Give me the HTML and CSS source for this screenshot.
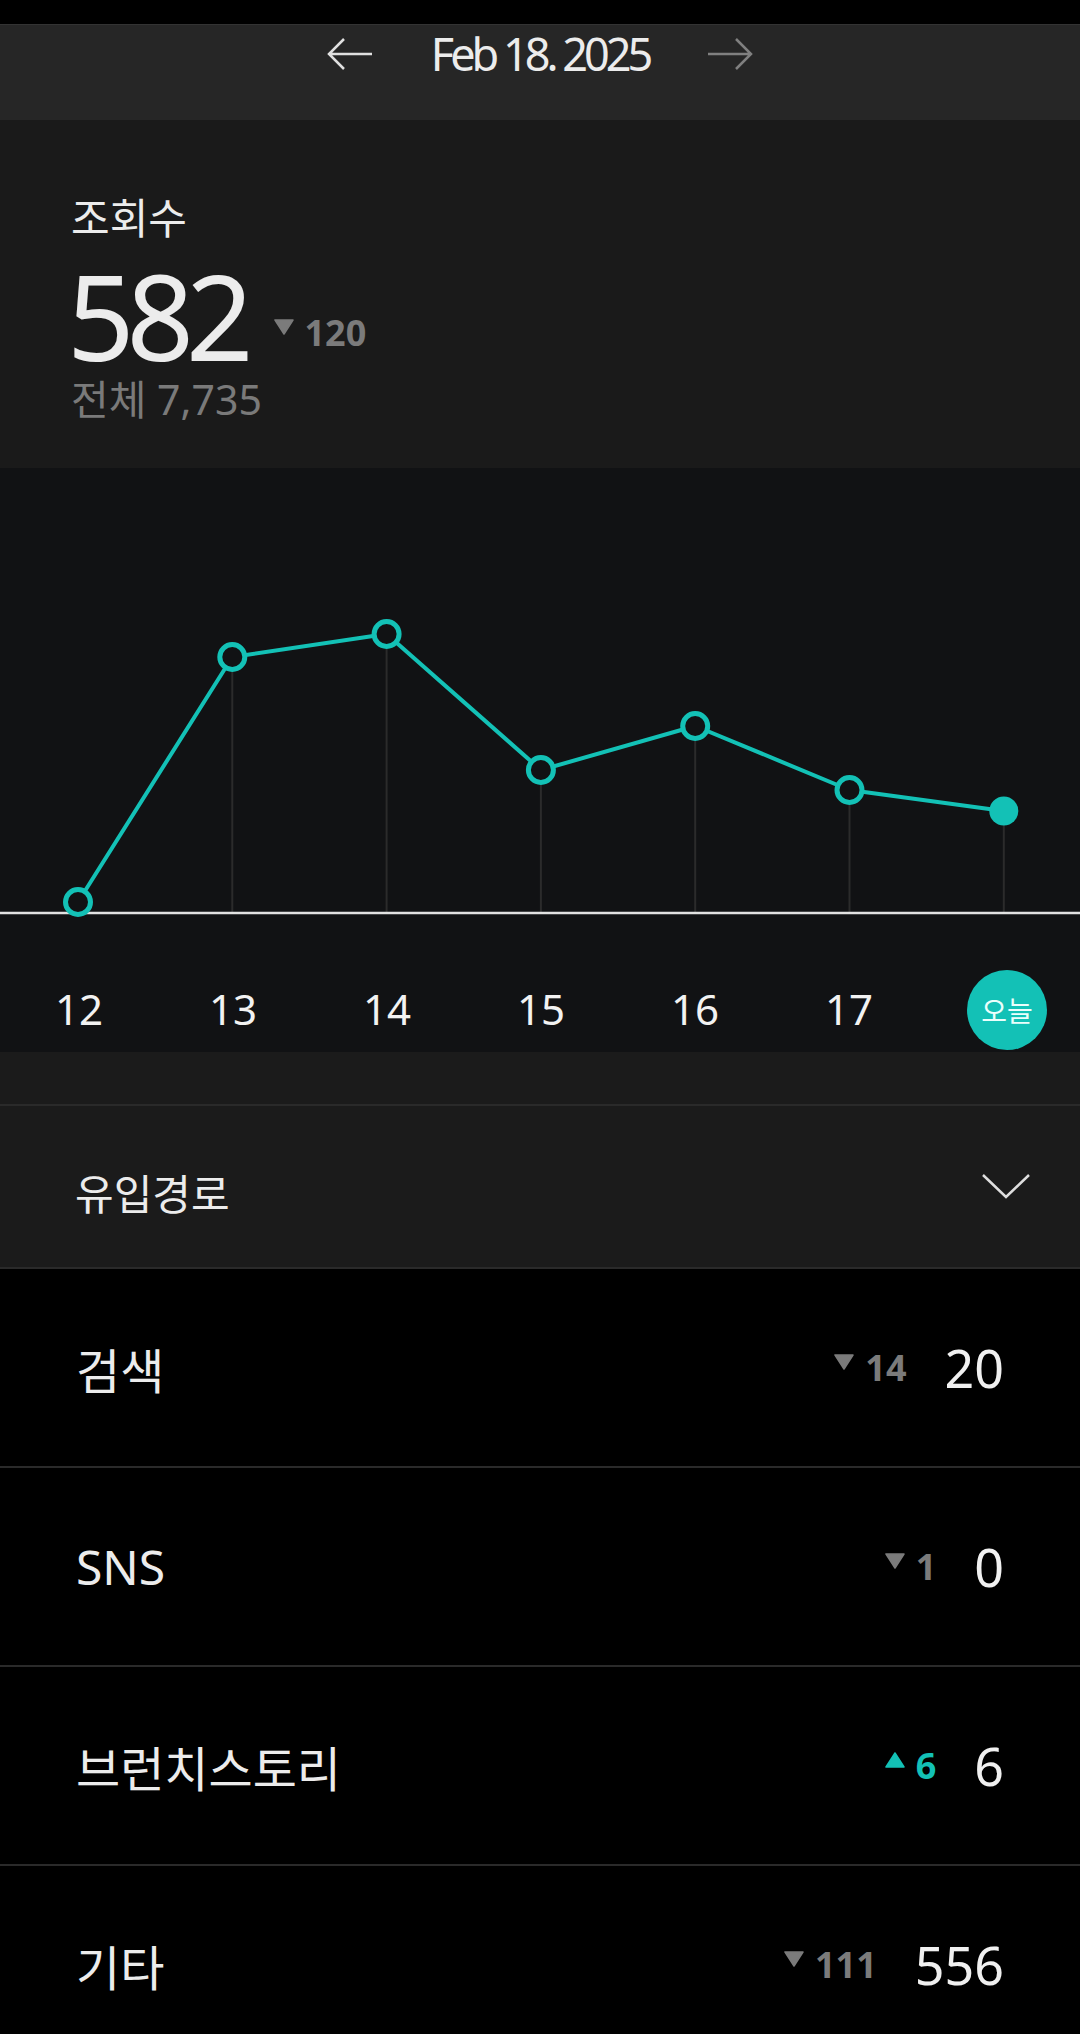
FILE: index.html
```html
<!DOCTYPE html>
<html lang="ko">
<head>
	<meta charset="UTF-8">
	<title>조회수 통계</title>
	<link rel="stylesheet" href="styles.css">
</head>
<body>
	<div class="app">
		<div class="status"></div>

		<!-- 날짜 선택 -->
		<header class="datebar">
			<svg class="arrow prev" viewBox="0 0 46 32"><path d="M45 16H2M17 1L2 16L17 31"/></svg>
			<span class="date">Feb 18. 2025</span>
			<svg class="arrow next" viewBox="0 0 46 32"><path d="M1 16H44M29 1L44 16L29 31"/></svg>
		</header>

		<!-- 요약 -->
		<section class="summary">
			<div class="label">조회수</div>
			<div class="big-row">
				<span class="big">582</span>
				<span class="delta down">
					<svg viewBox="0 0 20 16"><path d="M1 1H19L10 15Z"/></svg>
					<b>120</b>
				</span>
			</div>
			<div class="total">전체 7,735</div>
		</section>

		<!-- 그래프 -->
		<section class="chart">
			<svg class="plot" viewBox="0 0 1080 472">
				<g class="grid">
					<line x1="232.3" y1="189" x2="232.3" y2="445"/>
					<line x1="386.6" y1="166" x2="386.6" y2="445"/>
					<line x1="540.9" y1="302" x2="540.9" y2="445"/>
					<line x1="695.2" y1="258" x2="695.2" y2="445"/>
					<line x1="849.5" y1="322" x2="849.5" y2="445"/>
					<line x1="1003.8" y1="343" x2="1003.8" y2="445"/>
				</g>
				<line class="axis" x1="0" y1="445" x2="1080" y2="445"/>
				<polyline class="trend" points="78,434 232.3,189 386.6,166 540.9,302 695.2,258 849.5,322 1003.8,343"/>
				<g class="dots">
					<circle cx="78" cy="434" r="12.5"/>
					<circle cx="232.3" cy="189" r="12.5"/>
					<circle cx="386.6" cy="166" r="12.5"/>
					<circle cx="540.9" cy="302" r="12.5"/>
					<circle cx="695.2" cy="258" r="12.5"/>
					<circle cx="849.5" cy="322" r="12.5"/>
					<circle class="now" cx="1003.8" cy="343" r="14.5"/>
				</g>
			</svg>
			<ul class="days">
				<li>12</li>
				<li>13</li>
				<li>14</li>
				<li>15</li>
				<li>16</li>
				<li>17</li>
				<li class="today"><span>오늘</span></li>
			</ul>
		</section>

		<div class="gap"></div>

		<!-- 유입경로 -->
		<div class="source-head">
			<span>유입경로</span>
			<svg class="chevron" viewBox="0 0 50 26"><path d="M2 2L25 24L48 2"/></svg>
		</div>
		<ul class="sources">
			<li>
				<span class="name">검색</span>
				<span class="delta down"><svg viewBox="0 0 20 16"><path d="M1 1H19L10 15Z"/></svg><b>14</b></span>
				<span class="val">20</span>
			</li>
			<li>
				<span class="name">SNS</span>
				<span class="delta down"><svg viewBox="0 0 20 16"><path d="M1 1H19L10 15Z"/></svg><b>1</b></span>
				<span class="val">0</span>
			</li>
			<li>
				<span class="name">브런치스토리</span>
				<span class="delta up"><svg viewBox="0 0 20 16"><path d="M1 15H19L10 1Z"/></svg><b>6</b></span>
				<span class="val">6</span>
			</li>
			<li>
				<span class="name">기타</span>
				<span class="delta down"><svg viewBox="0 0 20 16"><path d="M1 1H19L10 15Z"/></svg><b>111</b></span>
				<span class="val">556</span>
			</li>
		</ul>
	</div>
</body>
</html>
```

FILE: styles.css
```css
body, div, ul, li, header, section {
	margin: 0;
	padding: 0;
}
body {
	background: #000;
	font-family: "Noto Sans", "Noto Sans CJK KR", sans-serif;
	color: #eee;
}
ul {
	list-style-type: none;
}
.app {
	width: 1080px;
	height: 2034px;
	overflow: hidden;
}
.status {
	height: 24px;
	background: #000;
}

/* date bar */
.datebar {
	height: 96px;
	box-sizing: border-box;
	padding-top: 6px;
	background: #262626;
	border-top: 1px solid #333;
	display: flex;
	justify-content: center;
	align-items: flex-start;
}
.datebar .date {
	font-size: 45px;
	line-height: 45px;
	letter-spacing: -4px;
	color: #ececec;
	margin: 0 58px;
}
.arrow {
	width: 46px;
	height: 32px;
	margin-top: 7px;
	fill: none;
	stroke-width: 2.5;
}
.arrow.prev {
	stroke: #e0e0e0;
}
.arrow.next {
	stroke: #808080;
}

/* summary */
.summary {
	height: 348px;
	box-sizing: border-box;
	padding: 74px 0 0 71px;
	background: #1a1a1a;
}
.summary .label {
	font-size: 42px;
	line-height: 48px;
	color: #ececec;
}
.big-row {
	display: flex;
	align-items: flex-end;
	margin-top: 15px;
}
.big {
	margin-left: -4px;
	font-size: 118px;
	line-height: 118px;
	letter-spacing: -8px;
	color: #ececec;
}
.delta {
	display: flex;
	align-items: center;
	color: #7b7b7b;
}
.delta svg {
	width: 20px;
	height: 16px;
	margin: 0 11px 12px 0;
}
.delta b {
	font-size: 36px;
	line-height: 36px;
	font-weight: 700;
}
.delta.down svg {
	fill: #7b7b7b;
	stroke: #7b7b7b;
	stroke-width: 1.5;
	stroke-linejoin: round;
}
.delta.up {
	color: #13c1b6;
}
.delta.up svg {
	fill: #13c1b6;
	stroke: #13c1b6;
	stroke-width: 1.5;
	stroke-linejoin: round;
}
.big-row .delta {
	margin: 0 0 24px 28px;
}
.total {
	font-size: 41px;
	line-height: 48px;
	color: #7a7a7a;
}

/* chart */
.chart {
	height: 584px;
	background: #111214;
}
.plot {
	display: block;
	width: 1080px;
	height: 472px;
}
.plot .grid line {
	stroke: #2b2b2b;
	stroke-width: 2;
}
.plot .axis {
	stroke: #e2e2e2;
	stroke-width: 2.5;
}
.plot .trend {
	fill: none;
	stroke: #13c1b6;
	stroke-width: 4;
	stroke-linejoin: round;
}
.plot .dots circle {
	fill: #111214;
	stroke: #13c1b6;
	stroke-width: 5;
}
.plot .dots circle.now {
	fill: #13c1b6;
	stroke: none;
}
.days {
	display: grid;
	grid-template-columns: repeat(7, 1fr);
	align-items: center;
	justify-items: center;
	height: 112px;
	box-sizing: border-box;
	padding: 24px 0 0 2px;
	font-size: 42px;
	color: #f2f2f2;
}
.days .today span {
	display: flex;
	align-items: center;
	justify-content: center;
	width: 80px;
	height: 80px;
	margin: 4px 0 0 8px;
	border-radius: 50%;
	background: #13c1b6;
	font-size: 28px;
	color: #eafffc;
}

.gap {
	height: 52px;
	background: #1b1b1b;
	border-bottom: 2px solid #2a2a2a;
}

/* sources */
.source-head {
	display: flex;
	justify-content: space-between;
	align-items: center;
	height: 163px;
	box-sizing: border-box;
	padding: 10px 49px 0 75px;
	background: #1b1b1b;
	border-bottom: 2px solid #2a2a2a;
	font-size: 42px;
	color: #ececec;
}
.chevron {
	width: 50px;
	height: 26px;
	margin-bottom: 12px;
	fill: none;
	stroke: #dedede;
	stroke-width: 2.5;
}
.sources li {
	display: flex;
	align-items: center;
	height: 199px;
	box-sizing: border-box;
	padding: 0 76px 0 76px;
	border-top: 2px solid #2a2a2a;
}
.sources li:first-child {
	border-top: none;
	height: 197px;
}
.sources .name {
	flex: 1;
	font-size: 48px;
	color: #ececec;
}
.sources .val {
	margin-left: 38px;
	font-size: 52px;
	color: #f0f0f0;
}
```
